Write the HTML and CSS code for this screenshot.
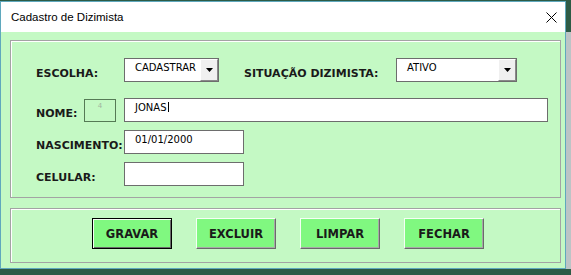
FILE: index.html
```html
<!DOCTYPE html>
<html lang="pt-BR">
<head>
    <meta charset="UTF-8">
    <meta name="viewport" content="width=device-width, initial-scale=1.0">
    <title>Cadastro de Dizimista</title>
    <link rel="stylesheet" href="styles.css">
</head>
<body>
    <div class="window">
        <div class="titlebar">
            <span class="title">Cadastro de Dizimista</span>
            <svg class="close" width="11" height="11" viewBox="0 0 11 11">
                <path d="M0.5 0.5 L10.5 10.5 M10.5 0.5 L0.5 10.5" stroke="#000" stroke-width="1" fill="none"/>
            </svg>
        </div>

        <div class="client">
            <div class="frame form">
                <div class="row row-first">
                    <div class="cell"><span class="label">ESCOLHA:</span></div>
                    <div class="combo combo-escolha">
                        <span class="value">CADASTRAR</span>
                        <span class="drop">
                            <svg width="7" height="4" viewBox="0 0 7 4"><polygon points="0,0 7,0 3.5,4" fill="#000"/></svg>
                        </span>
                    </div>
                    <div class="cell cell-situacao"><span class="label">SITUAÇÃO DIZIMISTA:</span></div>
                    <div class="combo combo-situacao">
                        <span class="value">ATIVO</span>
                        <span class="drop">
                            <svg width="7" height="4" viewBox="0 0 7 4"><polygon points="0,0 7,0 3.5,4" fill="#000"/></svg>
                        </span>
                    </div>
                </div>

                <div class="row row-name">
                    <div class="cell">
                        <span class="label">NOME:</span>
                        <span class="code-box">4</span>
                    </div>
                    <div class="textbox textbox-wide">JONAS<span class="caret"></span></div>
                </div>

                <div class="row">
                    <div class="cell"><span class="label">NASCIMENTO:</span></div>
                    <div class="textbox">01/01/2000</div>
                </div>

                <div class="row">
                    <div class="cell"><span class="label">CELULAR:</span></div>
                    <div class="textbox"></div>
                </div>
            </div>

            <div class="frame actions">
                <button class="btn default">GRAVAR</button>
                <button class="btn">EXCLUIR</button>
                <button class="btn">LIMPAR</button>
                <button class="btn">FECHAR</button>
            </div>
        </div>
    </div>
</body>
</html>
```

FILE: styles.css
```css
body {
    margin: 0;
    padding-top: 1px;
    background: linear-gradient(#2d5b45 0, #2d5b45 32px, #bcc4c6 32px);
    font-family: "DejaVu Sans", Verdana, sans-serif;
}

.window {
    width: 564px;
    height: 266px;
    border: 1px solid #5fa8bd;
    display: flex;
    flex-direction: column;
}

.titlebar {
    height: 30px;
    background: #fff;
    display: flex;
    align-items: center;
    justify-content: space-between;
    padding: 0 8px 0 10px;
}

.title {
    font-family: "Liberation Sans", Arial, sans-serif;
    font-size: 11.5px;
    color: #000;
}

.client {
    flex: 1;
    background: #c4f9c4;
    padding: 8px 4px 0 9px;
}

/* etched frame like the VBA Frame control */
.frame {
    border: 1px solid #a3a3a3;
    box-shadow: inset 1px 1px 0 #fff;
}

.form {
    height: 158px;
    box-sizing: border-box;
    padding: 17px 0 11px 25px;
    display: flex;
    flex-direction: column;
    gap: 8px;
}

.row {
    display: flex;
    align-items: center;
    height: 24px;
}

.row-first {
    margin-bottom: 8px;
}

.cell {
    width: 88px;
    display: flex;
    align-items: center;
}

.cell-situacao {
    width: 152px;
    margin-left: 25px;
}

.label {
    font-size: 11px;
    font-weight: bold;
    line-height: 14px;
    padding-top: 8px;
    color: #1a1a1a;
    white-space: nowrap;
}

.code-box {
    width: 32px;
    height: 23px;
    box-sizing: border-box;
    margin-left: auto;
    margin-right: 8px;
    border: 1px solid #557a55;
    font-size: 7px;
    line-height: 12px;
    color: #9fb59f;
    text-align: center;
}

.combo,
.textbox {
    height: 24px;
    box-sizing: border-box;
    border: 1px solid #6d6d6d;
    background: #fff;
    font-size: 10px;
    line-height: 16px;
    color: #000;
}

.combo {
    display: flex;
    justify-content: space-between;
}

.combo-escolha {
    width: 95px;
}

.combo-situacao {
    width: 121px;
}

.value {
    padding: 1px 0 0 10px;
}

.drop {
    width: 18px;
    box-sizing: border-box;
    border: 1px solid;
    border-color: #fff #8a8a8a #8a8a8a #fff;
    background: #f0f0f0;
    display: flex;
    align-items: center;
    justify-content: center;
}

.textbox {
    width: 120px;
    padding: 1px 0 0 10px;
}

.textbox-wide {
    width: 424px;
}

.caret {
    display: inline-block;
    width: 1px;
    height: 10px;
    background: #000;
    margin-left: 1px;
    vertical-align: -1px;
}

.actions {
    margin-top: 10px;
    height: 55px;
    box-sizing: border-box;
    padding: 9px 0 0 81px;
    display: flex;
    gap: 24px;
}

.btn {
    width: 80px;
    height: 31px;
    padding: 0;
    background: #80f880;
    border: 1px solid;
    border-color: #f4fff4 #6a6a6a #6a6a6a #f4fff4;
    box-shadow: inset -1px -1px 0 #a8a8a8;
    font-family: "DejaVu Sans", Verdana, sans-serif;
    font-size: 11.5px;
    font-weight: bold;
    color: #1a1a1a;
}

.btn.default {
    border-color: #000;
    box-shadow: inset 1px 1px 0 #f4fff4, inset -1px -1px 0 #6a6a6a;
}
```
